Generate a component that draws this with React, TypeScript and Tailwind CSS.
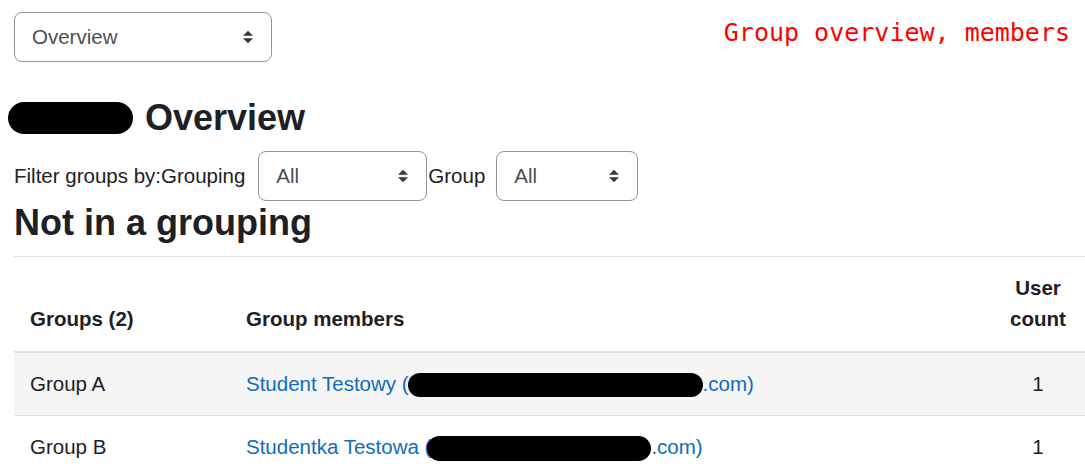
import type { ReactNode } from 'react'

function Arrows() {
  return (
    <svg width="10" height="14" viewBox="0 0 4 5" className="shrink-0" aria-hidden>
      <path d="M2 0L0 2h4zm0 5L0 3h4z" fill="#343a40" />
    </svg>
  )
}

function FakeSelect({ value, className }: { value: string; className: string }) {
  return (
    <div
      className={`flex h-[50px] items-center justify-between rounded-[8px] border border-[#8f959e] bg-white pl-[17px] pr-[18px] text-[#495057] ${className}`}
    >
      <span>{value}</span>
      <Arrows />
    </div>
  )
}

// black marker bar over the hidden part of a name or e-mail
function Redacted({ className }: { className: string }) {
  return <span className={`inline-block rounded-full bg-black align-middle ${className}`} />
}

type Row = { group: string; member: ReactNode; count: number }

const rows: Row[] = [
  {
    group: 'Group A',
    member: (
      <>
        Student Testowy (
        <Redacted className="-ml-[1px] h-[24px] w-[295px]" />
        .com)
      </>
    ),
    count: 1,
  },
  {
    group: 'Group B',
    member: (
      <>
        Studentka Testowa (
        <Redacted className="-ml-[4px] h-[25px] w-[224px]" />
        .com)
      </>
    ),
    count: 1,
  },
]

export default function App() {
  return (
    <div className="min-h-screen overflow-hidden bg-white pl-[14px] pt-[12px] font-['Liberation_Sans',Arial,sans-serif] text-[20.5px] leading-[1.5] text-[#1d2125]">
      <div className="flex items-start justify-between pr-[15px]">
        <FakeSelect value="Overview" className="w-[258px]" />
        <div className="mt-[6px] font-['DejaVu_Sans_Mono',monospace] text-[25px] leading-[29px] text-[#ff0000]">
          Group overview, members
        </div>
      </div>

      <h2 className="mt-[34px] text-[36px] font-bold leading-[43px]">
        <span className="relative inline-block h-[30px] w-[121px] align-middle">
          <span className="absolute -left-[6px] top-[-3px] h-[32px] w-[125px] rounded-full bg-black" />
        </span>{' '}
        Overview
      </h2>

      <div className="mt-[12px] flex h-[50px] items-center">
        <span className="mr-[13px]">Filter groups by:Grouping</span>
        <FakeSelect value="All" className="w-[169px]" />
        <span className="ml-[1px] mr-[11px]">Group</span>
        <FakeSelect value="All" className="w-[142px]" />
      </div>

      <h3 className="text-[36px] font-bold leading-[43px]">Not in a grouping</h3>

      <table className="mt-[12px] w-full table-fixed border-collapse">
        <thead>
          <tr className="border-t border-b-2 border-t-[#dee2e6] border-b-[#dee2e6]">
            <th className="w-[216px] px-[16px] py-[16px] text-left align-bottom font-bold">Groups (2)</th>
            <th className="px-[16px] py-[16px] text-left align-bottom font-bold">Group members</th>
            <th className="w-[94px] px-[16px] py-[16px] text-center align-bottom font-bold">User count</th>
          </tr>
        </thead>
        <tbody>
          {rows.map((row, i) => (
            <tr key={row.group} className={`border-b border-[#dee2e6] ${i % 2 === 0 ? 'bg-[#f5f5f5]' : 'bg-white'}`}>
              <td className="px-[16px] py-[16px]">{row.group}</td>
              <td className="whitespace-nowrap px-[16px] py-[16px] text-[#0f6cbf]">{row.member}</td>
              <td className="px-[16px] py-[16px] text-center">{row.count}</td>
            </tr>
          ))}
        </tbody>
      </table>
    </div>
  )
}
